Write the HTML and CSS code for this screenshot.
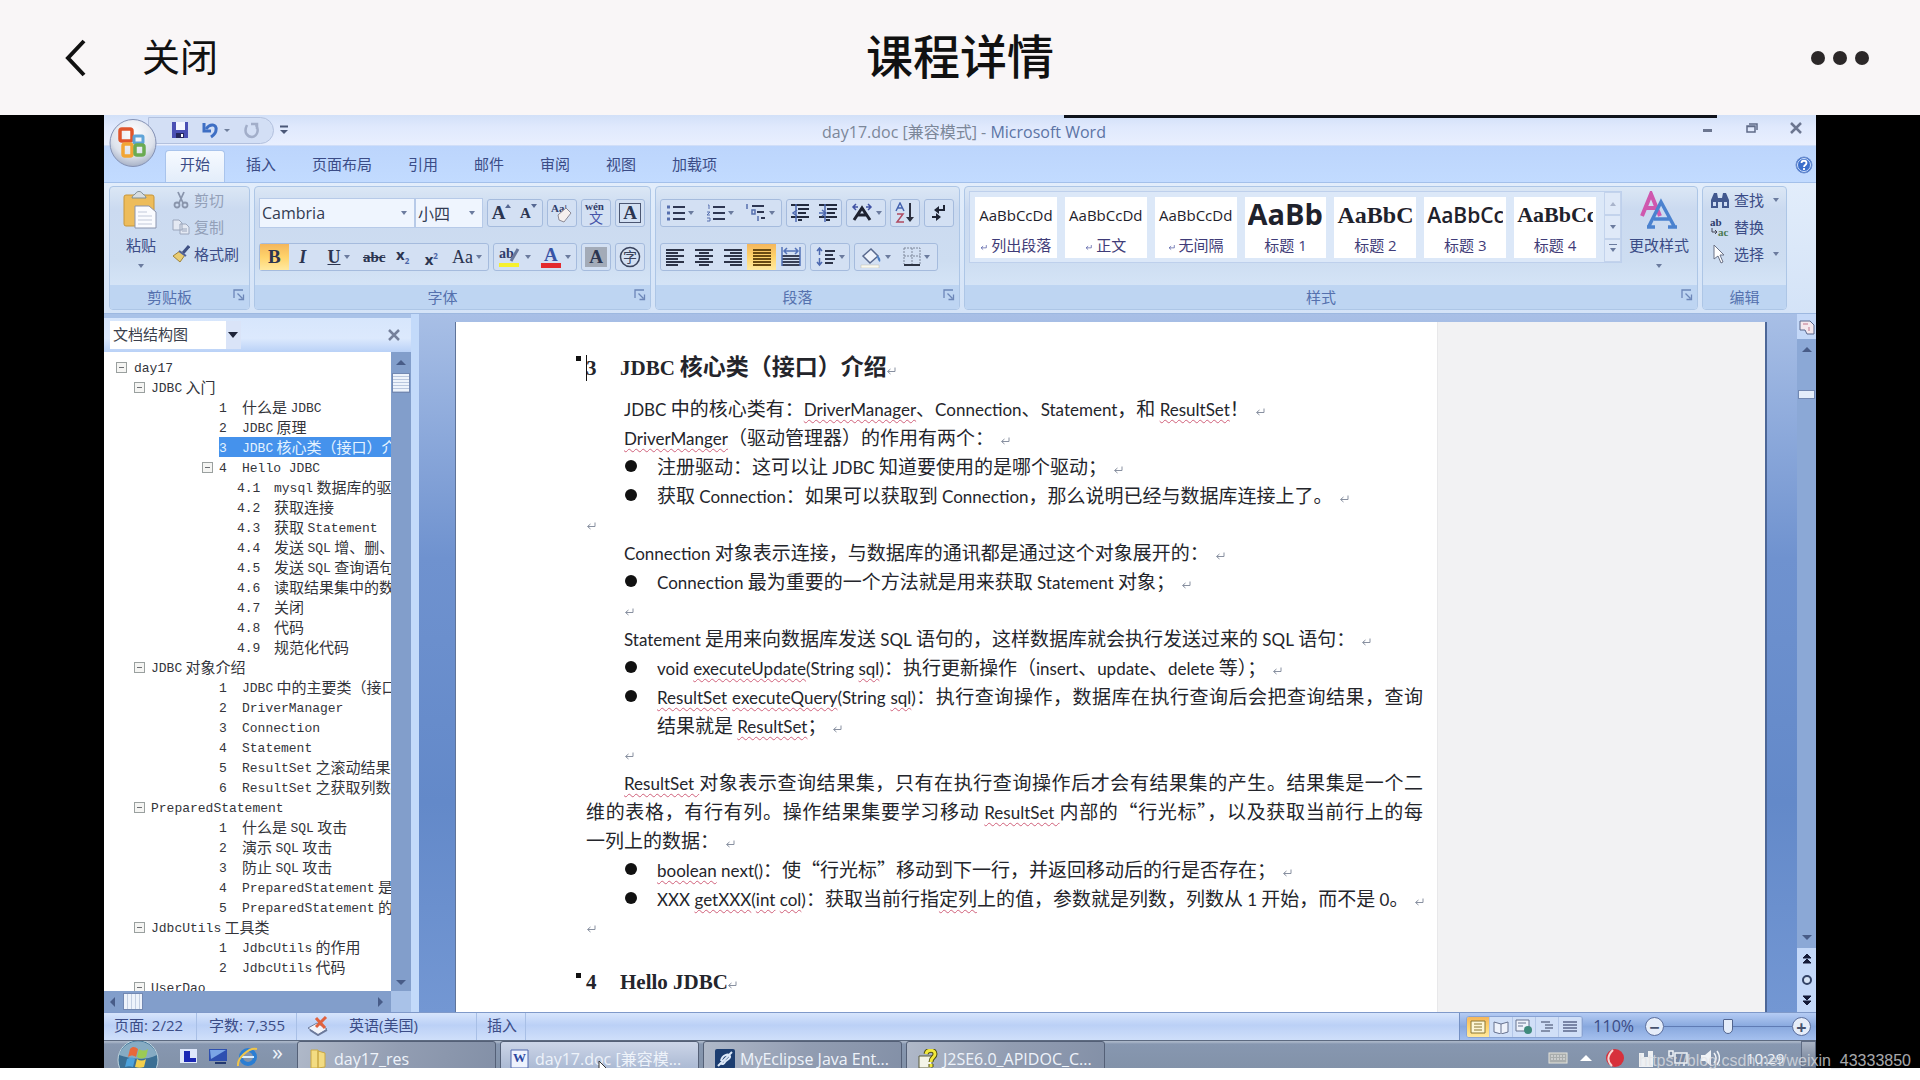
FILE: index.html
```html
<!DOCTYPE html>
<html lang="zh-CN">
<head>
<meta charset="utf-8">
<title>课程详情</title>
<link rel="stylesheet" href="styles.css">
</head>
<body>
<svg class="defs" aria-hidden="true">
  <symbol id="ret" viewBox="0 0 10 8"><path d="M9 0.5V4.5H2M4.5 2L1.5 4.5L4.5 7" fill="none" stroke="currentColor"/></symbol>
  <symbol id="launch" viewBox="0 0 12 12"><path d="M1 9V1h9M4.500 4.500l5 5M10.500 5.500v5h-5" fill="none" stroke="#6c86b8" stroke-width="1.300"/></symbol>
</svg>

<header class="app-bar">
  <div class="app-left">
    <button class="plain" aria-label="返回"><svg width="22" height="38" viewBox="0 0 22 38"><path d="M19 2L3 19L19 36" fill="none" stroke="#111" stroke-width="4"/></svg></button>
    <button class="plain close-text">关闭</button>
  </div>
  <h1>课程详情</h1>
  <button class="plain more" aria-label="更多"><svg width="60" height="16" viewBox="0 0 60 16" fill="#2c2829"><ellipse cx="8" cy="8" rx="7" ry="7"/><ellipse cx="30" cy="8" rx="7" ry="7"/><ellipse cx="52" cy="8" rx="7" ry="7"/></svg></button>
</header>

<main class="stage">
<div class="word">
  <div class="progress"></div>
  <button class="plain orb" aria-label="Office"><svg width="48" height="50" viewBox="0 0 48 50"><defs><radialGradient id="og" cx=".5" cy=".3" r=".8"><stop offset="0" stop-color="#fff"/><stop offset=".6" stop-color="#dde2ec"/><stop offset="1" stop-color="#8f9cb6"/></radialGradient></defs><ellipse cx="24" cy="25" rx="23" ry="23.500" fill="url(#og)" stroke="#8491b4"/><g fill="none" stroke-width="3.500"><rect x="11" y="11" width="12" height="12" rx="2" stroke="#e0552b"/><rect x="25" y="18" width="9" height="7" rx="1" stroke="#5fa4d8" stroke-width="3"/><rect x="14" y="26" width="9" height="12" rx="2" stroke="#f2a534"/><rect x="26" y="27" width="9" height="10" rx="2" stroke="#6bab52"/></g></svg></button>

  <div class="titlebar">
    <div class="qat">
      <button class="plain" aria-label="保存"><svg width="18" height="18" viewBox="0 0 18 18"><path d="M1 1h16v16H1z" fill="#4a50b4"/><path d="M5 1h9v8H5z" fill="#f3f6ff"/><path d="M5 12h8v5H5z" fill="#24265c"/><path d="M10 13h2v3h-2z" fill="#fff"/></svg></button>
      <button class="plain" aria-label="撤销"><svg width="28" height="18" viewBox="0 0 28 18"><path d="M2 2v8h7" fill="none" stroke="#3e6fc4" stroke-width="3"/><path d="M4 8c4-6 11-5 10 1c0 3-2 5-5 7" fill="none" stroke="#3e6fc4" stroke-width="3"/><path d="M22 8h6l-3 3z" fill="#6f7f9b"/></svg></button>
      <button class="plain" aria-label="重复"><svg width="18" height="18" viewBox="0 0 18 18"><path d="M4 4c-4 8 1 12 5 12s8-6 4-12M8 3h6v5" fill="none" stroke="#a2aec9" stroke-width="2.500"/></svg></button>
    </div>
    <button class="plain qat-more" aria-label="自定义快速访问工具栏"><svg width="8" height="10" viewBox="0 0 8 10"><path d="M0 1.500h8" stroke="#4b5878" stroke-width="2"/><path d="M0 5h8L4 9z" fill="#4b5878"/></svg></button>
    <div class="doc-title">day17.doc [兼容模式] - <span>Microsoft Word</span></div>
    <div class="win-buttons">
      <button class="plain" aria-label="最小化"><svg width="12" height="12"><path d="M1 8.500h9" stroke="#6c7690" stroke-width="3"/></svg></button>
      <button class="plain" aria-label="还原"><svg width="12" height="12"><path d="M1 4h8v6H1zM3 2h8v6M1 4.500h8" fill="none" stroke="#5f6b88" stroke-width="1.500"/></svg></button>
      <button class="plain" aria-label="关闭窗口"><svg width="12" height="12"><path d="M1 1l10 10M11 1L1 11" stroke="#6c7690" stroke-width="2.500"/></svg></button>
    </div>
  </div>

  <nav class="tabs">
    <button class="tab on">开始</button><button class="tab">插入</button><button class="tab">页面布局</button><button class="tab">引用</button><button class="tab">邮件</button><button class="tab">审阅</button><button class="tab">视图</button><button class="tab">加载项</button>
    <button class="plain help" aria-label="帮助"><svg width="18" height="18" viewBox="0 0 18 18"><circle cx="9" cy="9" r="8" fill="#3c6fcb" stroke="#6d8fcf"/><circle cx="9" cy="9" r="6.500" fill="none" stroke="#cfe0fb"/><path d="M6.500 7c0-3 5-3 5 0c0 2-2.500 2-2.500 4M9 12v2" fill="none" stroke="#fff" stroke-width="1.800"/></svg></button>
  </nav>

  <div class="ribbon">
    <section class="group g-clip">
      <div class="group-body clip">
        <button class="plain big paste"><svg width="36" height="40" viewBox="0 0 36 40"><rect x="1" y="5" width="30" height="31" rx="2" fill="#edbc5b" stroke="#c7963a"/><path d="M9 8c0-3 3-3 4-5s5-2 6 0s4 2 4 5z" fill="#d7dde0" stroke="#7f8d93"/><path d="M12 16h14l7 6v16H12z" fill="#fafbff" stroke="#8b94ad"/><path d="M15 22h9M15 26h14M15 30h14M15 34h14" stroke="#c2c9da"/></svg><span>粘贴</span><i class="dd"></i></button>
        <div class="stack">
          <button class="plain row off"><svg width="18" height="18" viewBox="0 0 18 18" fill="none" stroke="#8995ac" stroke-width="1.800"><path d="M6 1l5 11M12 1L7 12"/><circle cx="5" cy="14" r="2.500"/><circle cx="13" cy="14" r="2.500"/></svg>剪切</button>
          <button class="plain row off"><svg width="18" height="16" viewBox="0 0 18 16" fill="#e4e9f3" stroke="#9ba6bc"><path d="M1 1h6l3 3v7H1zM8 5h6l3 3v7H8z"/><path d="M10 10h5M10 12h5"/></svg>复制</button>
          <button class="plain row"><svg width="18" height="18" viewBox="0 0 18 18"><path d="M17 1l-6 7" stroke="#3f5184" stroke-width="3"/><path d="M8 6l5 4l-5 7L1 11z" fill="#e9cc72" stroke="#9f833b"/><path d="M7 6l7 5" stroke="#51629a" stroke-width="2"/></svg>格式刷</button>
        </div>
      </div>
      <footer><span>剪贴板</span><svg class="launch"><use href="#launch"/></svg></footer>
    </section>

    <section class="group g-font">
      <div class="group-body rows">
        <div class="line">
          <div class="combo wide"><input value="Cambria" aria-label="字体"><i class="dd"></i></div><div class="combo"><input value="小四" aria-label="字号"><i class="dd"></i></div>
          <div class="tb w56 serif first"><button aria-label="增大字体"><b>A</b><i class="tri up"></i></button><button aria-label="缩小字体"><b class="sm">A</b><i class="tri"></i></button></div>
          <div class="tb w30"><button aria-label="清除格式"><svg width="24" height="22" viewBox="0 0 24 22"><text x="1" y="10" class="t9">Aa|</text><path d="M8 13l8-7l5 5l-7 9l-5-2z" fill="#f6f0ee" stroke="#8c8a96"/></svg></button></div>
          <div class="tb w30"><button aria-label="拼音指南"><svg width="24" height="24" viewBox="0 0 24 24"><text x="1" y="9" class="t10">wén</text><text x="5" y="22" class="t14">文</text></svg></button></div>
          <div class="tb w30 serif"><button aria-label="字符边框"><b class="boxed">A</b></button></div>
        </div>
        <div class="line">
          <div class="tb w230 serif">
            <button class="hot"><b>B</b></button><button><em>I</em></button><button class="x"><u>U</u><i class="dd"></i></button><button><s>abc</s></button><button class="sans"><b>x<sub>2</sub></b></button><button class="sans"><b>x<sup>2</sup></b></button><button class="x">Aa<i class="dd"></i></button>
          </div>
          <div class="tb w83"><button class="x" aria-label="突出显示"><svg width="24" height="24" viewBox="0 0 24 24"><path d="M1 18h20v4H1z" fill="#f6f02e"/><text x="1" y="13" class="t12">ab</text><path d="M20 4l-7 12" stroke="#69789c" stroke-width="3"/></svg><i class="dd"></i></button><button class="x" aria-label="字体颜色"><svg width="22" height="24" viewBox="0 0 22 24"><path d="M1 18h20v5H1z" fill="#e32a2e"/><text x="4" y="16" class="tA">A</text></svg><i class="dd"></i></button></div>
          <div class="tb w30 serif"><button aria-label="字符底纹"><b class="shade">A</b></button></div>
          <div class="tb w30"><button aria-label="带圈字符"><svg width="22" height="22" viewBox="0 0 22 22"><circle cx="11" cy="11" r="9.500" fill="none" stroke="#39435d" stroke-width="1.500"/><text x="4" y="16" class="t14 dk">字</text></svg></button></div>
        </div>
      </div>
      <footer><span>字体</span><svg class="launch"><use href="#launch"/></svg></footer>
    </section>

    <section class="group g-para">
      <div class="group-body rows">
        <div class="line">
          <div class="tb w122">
            <button class="x" aria-label="项目符号"><svg width="18" height="18"><path d="M6 3h12M6 9h12M6 15h12" stroke="#2e3752" stroke-width="2"/><path d="M0 3h3M0 9h3M0 15h3" stroke="#566fae" stroke-width="3"/></svg><i class="dd"></i></button>
            <button class="x" aria-label="编号"><svg width="18" height="18"><path d="M6 3h12M6 9h12M6 15h12" stroke="#2e3752" stroke-width="2"/><path d="M1 1h1v4M0 8h3l-3 3h3M0 14h3v3H0" fill="none" stroke="#566fae"/></svg><i class="dd"></i></button>
            <button class="x" aria-label="多级列表"><svg width="20" height="20"><path d="M6 3h12M11 9h7M15 15h4" stroke="#2e3752" stroke-width="2"/><path d="M1 1v5M6 7h3v4H6zM12 13v5" fill="none" stroke="#566fae" stroke-width="1.500"/></svg><i class="dd"></i></button>
          </div>
          <div class="tb w57"><button aria-label="减少缩进量"><svg width="20" height="20"><path d="M1 2h18M8 6h11M8 10h8M1 14h18M8 17h4" stroke="#222a3e" stroke-width="2"/><path d="M7 7l-4 3l4 3M6 1v18" fill="none" stroke="#4d69b0" stroke-width="1.500"/></svg></button><button aria-label="增加缩进量"><svg width="20" height="20"><path d="M1 2h18M9 6h10M9 10h8M1 14h18M8 17h4" stroke="#222a3e" stroke-width="2"/><path d="M1 10h6M4 7l4 3l-4 3M7 1v18" fill="none" stroke="#4d69b0" stroke-width="1.500"/></svg></button></div>
          <div class="tb w39"><button class="x" aria-label="中文版式"><svg width="22" height="20"><path d="M3 17L11 5L19 17M7 12h8" fill="none" stroke="#1e2230" stroke-width="3"/><path d="M5 1L2 4l3 3M2 4h5M17 1l3 3l-3 3M20 4h-5" fill="none" stroke="#4052a4" stroke-width="1.500"/></svg><i class="dd"></i></button></div>
          <div class="tb w30"><button aria-label="排序"><svg width="20" height="22"><path d="M1 9L5 1L9 9M2 6h6" fill="none" stroke="#4664b0" stroke-width="1.500"/><path d="M2 12h6l-6 8h7" fill="none" stroke="#b04a62" stroke-width="1.500"/><path d="M15 1v15" stroke="#2c3040" stroke-width="2"/><path d="M11 15h8l-4 5z" fill="#2c3040"/></svg></button></div>
          <div class="tb w30"><button aria-label="显示编辑标记"><svg width="18" height="20"><path d="M14 2v5H8M2 14h6" fill="none" stroke="#1e2434" stroke-width="2"/><path d="M9 3v8L4 7zM6 10v8l5-4z" fill="#1e2434"/></svg></button></div>
        </div>
        <div class="line">
          <div class="tb w145">
            <button aria-label="左对齐"><svg width="18" height="18"><path d="M0 2h18M0 5h12M0 8h18M0 11h12M0 14h18M0 17h12" stroke="#2d3448" stroke-width="2"/></svg></button><button aria-label="居中"><svg width="18" height="18"><path d="M0 2h18M4 5h10M0 8h18M4 11h10M0 14h18M4 17h10" stroke="#2d3448" stroke-width="2"/></svg></button><button aria-label="右对齐"><svg width="18" height="18"><path d="M0 2h18M6 5h12M0 8h18M6 11h12M0 14h18M6 17h12" stroke="#2d3448" stroke-width="2"/></svg></button><button class="hot" aria-label="两端对齐"><svg width="18" height="18"><path d="M0 2h18M0 5h18M0 8h18M0 11h18M0 14h18M0 17h18" stroke="#6a4a12" stroke-width="2"/></svg></button><button aria-label="分散对齐"><svg width="20" height="20"><path d="M1 9h18M1 12h18M1 15h18M1 18h18" stroke="#3a4258" stroke-width="2"/><path d="M1 0v19M19 0v19M3 4h14M6 1L3 4l3 3M14 1l3 3l-3 3" fill="none" stroke="#5473b8" stroke-width="1.500"/></svg></button>
          </div>
          <div class="tb w39"><button class="x" aria-label="行距"><svg width="20" height="20"><path d="M9 4h10M9 8h8M9 12h10M9 16h8" stroke="#2d3448" stroke-width="2"/><path d="M3.500 1v7M1 4l2.500-3L6 4M3.500 11v7M1 15l2.500 3L6 15" fill="none" stroke="#4d69b0" stroke-width="1.500"/></svg><i class="dd"></i></button></div>
          <div class="tb w84"><button class="x" aria-label="底纹"><svg width="22" height="22"><path d="M3 10l8-7l7 7l-8 7z" fill="#edf2fb" stroke="#59698e" stroke-width="1.500"/><path d="M17 9c3 2 4 5 3 7c-2-1-3-4-3-7" fill="#4d7fc4"/><path d="M1 19h18v3H1z" fill="#f9f9f1" stroke="#bdbdac" stroke-width=".5"/></svg><i class="dd"></i></button><button class="x" aria-label="框线"><svg width="18" height="20"><path d="M1 1h16v16M1 1v16M9 1v16M1 9h16" fill="none" stroke="#7d8699" stroke-dasharray="2 1"/><path d="M1 18h16" stroke="#2e3443" stroke-width="2"/></svg><i class="dd"></i></button></div>
        </div>
      </div>
      <footer><span>段落</span><svg class="launch"><use href="#launch"/></svg></footer>
    </section>

    <section class="group g-style">
      <div class="group-body styles">
        <div class="gallery">
          <button class="card"><span class="pv">AaBbCcDd</span><span><svg class="cr"><use href="#ret"/></svg> 列出段落</span></button>
          <button class="card"><span class="pv">AaBbCcDd</span><span><svg class="cr"><use href="#ret"/></svg> 正文</span></button>
          <button class="card"><span class="pv">AaBbCcDd</span><span><svg class="cr"><use href="#ret"/></svg> 无间隔</span></button>
          <button class="card"><span class="pv h1">AaBb</span><span>标题 1</span></button>
          <button class="card"><span class="pv h2">AaBbC</span><span>标题 2</span></button>
          <button class="card"><span class="pv h3">AaBbCc</span><span>标题 3</span></button>
          <button class="card"><span class="pv h4">AaBbCc</span><span>标题 4</span></button>
          <div class="gal-scroll"><button aria-label="上一行"><i class="dd up"></i></button><button aria-label="下一行"><i class="dd"></i></button><button aria-label="其他"><i class="dd bar"></i></button></div>
        </div>
        <button class="plain big change"><svg width="38" height="38" viewBox="0 0 38 38"><path d="M2 25L11 3L20 25M6 17h10" fill="none" stroke="#cf58ae" stroke-width="4"/><path d="M9 35L21 11L34 35M14 28h15M7 36h8M28 36h9" fill="none" stroke="#4b82cf" stroke-width="3.500"/></svg><span>更改样式</span><i class="dd"></i></button>
      </div>
      <footer><span>样式</span><svg class="launch"><use href="#launch"/></svg></footer>
    </section>

    <section class="group g-edit">
      <div class="group-body">
        <div class="stack">
          <button class="plain row"><svg width="20" height="18" viewBox="0 0 20 18"><path d="M1 17V9l3-7h3l1 5h4l1-5h3l3 7v8h-7v-6H8v6z" fill="#42588e"/><path d="M3 11h3v4H3zM14 11h3v4h-3z" fill="#cfdcf3"/></svg>查找<i class="dd"></i></button>
          <button class="plain row"><svg width="20" height="20" viewBox="0 0 20 20"><text x="0" y="9" class="t10">ab</text><text x="8" y="19" class="t10 gr">ac</text><path d="M2 11v4h5M5 13l2 2l-2 2" fill="none" stroke="#445"/></svg>替换</button>
          <button class="plain row"><svg width="20" height="20" viewBox="0 0 20 20"><path d="M4 1v14l4-3l3 7l2-1l-3-7h4z" fill="#fff" stroke="#6b7287"/></svg>选择<i class="dd"></i></button>
        </div>
      </div>
      <footer><span>编辑</span></footer>
    </section>
  </div>

  <div class="work">
    <aside class="pane">
      <div class="pane-head"><select aria-label="窗格"><option>文档结构图</option></select><i class="dd pane-dd"></i><button class="plain" aria-label="关闭窗格"><svg width="12" height="12"><path d="M1 1l10 10M11 1L1 11" stroke="#75809b" stroke-width="2.500"/></svg></button></div>
      <div class="pane-main">
        <ul class="tree">
          <li class="l0"><i class="box"></i><span class="en">day17</span></li>
          <li class="l1"><i class="box"></i><span class="en">JDBC</span> 入门</li>
          <li class="l2"><span class="n">1</span>什么是 <span class="en">JDBC</span></li>
          <li class="l2"><span class="n">2</span><span class="en">JDBC</span> 原理</li>
          <li class="l2 sel"><span class="n">3</span><span class="en">JDBC</span> 核心类（接口）介绍</li>
          <li class="l2 open"><i class="box"></i><span class="n">4</span><span class="en">Hello JDBC</span></li>
          <li class="l3"><span class="n">4.1</span><span class="en">mysql</span> 数据库的驱动</li>
          <li class="l3"><span class="n">4.2</span>获取连接</li>
          <li class="l3"><span class="n">4.3</span>获取 <span class="en">Statement</span></li>
          <li class="l3"><span class="n">4.4</span>发送 <span class="en">SQL</span> 增、删、改</li>
          <li class="l3"><span class="n">4.5</span>发送 <span class="en">SQL</span> 查询语句</li>
          <li class="l3"><span class="n">4.6</span>读取结果集中的数据</li>
          <li class="l3"><span class="n">4.7</span>关闭</li>
          <li class="l3"><span class="n">4.8</span>代码</li>
          <li class="l3"><span class="n">4.9</span>规范化代码</li>
          <li class="l1"><i class="box"></i><span class="en">JDBC</span> 对象介绍</li>
          <li class="l2"><span class="n">1</span><span class="en">JDBC</span> 中的主要类（接口）</li>
          <li class="l2"><span class="n">2</span><span class="en">DriverManager</span></li>
          <li class="l2"><span class="n">3</span><span class="en">Connection</span></li>
          <li class="l2"><span class="n">4</span><span class="en">Statement</span></li>
          <li class="l2"><span class="n">5</span><span class="en">ResultSet</span> 之滚动结果集</li>
          <li class="l2"><span class="n">6</span><span class="en">ResultSet</span> 之获取列数据</li>
          <li class="l1"><i class="box"></i><span class="en">PreparedStatement</span></li>
          <li class="l2"><span class="n">1</span>什么是 <span class="en">SQL</span> 攻击</li>
          <li class="l2"><span class="n">2</span>演示 <span class="en">SQL</span> 攻击</li>
          <li class="l2"><span class="n">3</span>防止 <span class="en">SQL</span> 攻击</li>
          <li class="l2"><span class="n">4</span><span class="en">PreparedStatement</span> 是什么</li>
          <li class="l2"><span class="n">5</span><span class="en">PreparedStatement</span> 的使用</li>
          <li class="l1"><i class="box"></i><span class="en">JdbcUtils</span> 工具类</li>
          <li class="l2"><span class="n">1</span><span class="en">JdbcUtils</span> 的作用</li>
          <li class="l2"><span class="n">2</span><span class="en">JdbcUtils</span> 代码</li>
          <li class="l1"><i class="box"></i><span class="en">UserDao</span></li>
        </ul>
        <div class="vbar"><i class="arr up"></i><span class="thumb"></span><i class="arr down"></i></div>
      </div>
      <div class="hbar"><i class="arr left"></i><span class="thumb"></span><i class="arr right"></i></div>
    </aside>

    <div class="canvas">
      <article class="paper">
        <div class="text">
          <h2><i class="sq"></i><i class="caret"></i><span class="num">3</span><span class="en">JDBC</span> 核心类（接口）介绍<svg class="cr"><use href="#ret"/></svg></h2>
          <p class="in"><span class="en">JDBC</span> 中的核心类有：<span class="en bad">DriverManager</span>、<span class="en">Connection</span>、<span class="en">Statement</span>，和 <span class="en bad">ResultSet</span>！<svg class="cr"><use href="#ret"/></svg></p>
          <p class="in"><span class="en bad">DriverManger</span>（驱动管理器）的作用有两个：<svg class="cr"><use href="#ret"/></svg></p>
          <p class="li">注册驱动：这可以让 <span class="en">JDBC</span> 知道要使用的是哪个驱动；<svg class="cr"><use href="#ret"/></svg></p>
          <p class="li">获取 <span class="en">Connection</span>：如果可以获取到 <span class="en">Connection</span>，那么说明已经与数据库连接上了。<svg class="cr"><use href="#ret"/></svg></p>
          <p class="blank"><svg class="cr"><use href="#ret"/></svg></p>
          <p class="in"><span class="en">Connection</span> 对象表示连接，与数据库的通讯都是通过这个对象展开的：<svg class="cr"><use href="#ret"/></svg></p>
          <p class="li"><span class="en">Connection</span> 最为重要的一个方法就是用来获取 <span class="en">Statement</span> 对象；<svg class="cr"><use href="#ret"/></svg></p>
          <p class="blank in"><svg class="cr"><use href="#ret"/></svg></p>
          <p class="in"><span class="en">Statement</span> 是用来向数据库发送 <span class="en">SQL</span> 语句的，这样数据库就会执行发送过来的 <span class="en">SQL</span> 语句：<svg class="cr"><use href="#ret"/></svg></p>
          <p class="li"><span class="en">void <span class="bad">executeUpdate</span>(String <span class="bad">sql</span>)</span>：执行更新操作（<span class="en">insert</span>、<span class="en">update</span>、<span class="en">delete</span> 等）；<svg class="cr"><use href="#ret"/></svg></p>
          <p class="li"><span class="full"><span class="en"><span class="bad">ResultSet</span> <span class="bad">executeQuery</span>(String <span class="bad">sql</span>)</span>：执行查询操作，数据库在执行查询后会把查询结果，查询</span>结果就是 <span class="en bad">ResultSet</span>；<svg class="cr"><use href="#ret"/></svg></p>
          <p class="blank in"><svg class="cr"><use href="#ret"/></svg></p>
          <p><span class="full in"><span class="en bad">ResultSet </span> 对象表示查询结果集，只有在执行查询操作后才会有结果集的产生。结果集是一个二</span><span class="full">维的表格，有行有列。操作结果集要学习移动 <span class="en bad">ResultSet </span> 内部的“行光标”，以及获取当前行上的每</span>一列上的数据：<svg class="cr"><use href="#ret"/></svg></p>
          <p class="li"><span class="en"><span class="bad">boolean</span> next()</span>：使“行光标”移动到下一行，并返回移动后的行是否存在；<svg class="cr"><use href="#ret"/></svg></p>
          <p class="li"><span class="en">XXX <span class="bad">getXXX</span>(<span class="bad">int</span> <span class="bad">col</span>)</span>：获取当前行指<span class="bad">定列</span>上的值，参数就是列数，列数从 <span class="en">1</span> 开始，而不是 <span class="en">0</span>。<svg class="cr"><use href="#ret"/></svg></p>
          <p class="blank"><svg class="cr"><use href="#ret"/></svg></p>
          <h2 class="next"><i class="sq"></i><span class="num">4</span><span class="en">Hello JDBC</span><svg class="cr"><use href="#ret"/></svg></h2>
        </div>
        <div class="notes"></div>
      </article>
    </div>
    <div class="docbar">
      <svg class="ruler" width="16" height="16" viewBox="0 0 16 16"><path d="M1 2h10l4 4v9H8l-2-4H1z" fill="#f4e8ee" stroke="#59668a"/><path d="M4 5h5M10 8v4" stroke="#c0758a"/></svg>
      <div class="track"><i class="arr up"></i><span class="thumb"></span><i class="arr down"></i></div>
      <svg class="jump" width="14" height="60" viewBox="0 0 14 60"><path d="M7 4l4 4H3zM7 9l4 4H3zM3 46h8l-4 4zM3 51h8l-4 4z" fill="#151b38" stroke="#151b38"/><circle cx="7" cy="30" r="4" fill="#d7e4f5" stroke="#334366" stroke-width="2"/></svg>
    </div>
  </div>

  <div class="status">
    <span class="cell c1">页面: 2/22</span><span class="cell c2">字数: 7,355</span>
    <span class="cell c3"><svg width="22" height="20" viewBox="0 0 22 20"><path d="M1 12l9-5l10 6l-9 6z" fill="#f1f4fb" stroke="#6c7a9c"/><path d="M3 14l8 5l9-5" fill="none" stroke="#6c7a9c" stroke-width="2"/><path d="M9 2l9 10M19 1L9 11" stroke="#e0623f" stroke-width="3"/></svg>英语(美国)</span><span class="cell c4">插入</span>
    <div class="views">
      <div class="view-set">
        <button class="hot" aria-label="页面视图"><svg width="16" height="14"><path d="M1 1h14v12H1z" fill="#fdf6d4" stroke="#8a7633"/><path d="M4 4h8M4 7h8M4 10h8" stroke="#8a7633"/></svg></button><button aria-label="阅读版式"><svg width="16" height="14"><path d="M1 2l7 2l7-2v10l-7 2l-7-2zM8 4v9" fill="#eef2fb" stroke="#66728f"/></svg></button><button aria-label="Web 版式"><svg width="18" height="16"><path d="M1 1h13v11H1zM3 4h8M3 7h5" fill="#eef2fb" stroke="#66728f"/><circle cx="13" cy="11" r="4" fill="#3f8a7c"/></svg></button><button aria-label="大纲视图"><svg width="14" height="14"><path d="M1 2h9M5 5h8M5 8h8M1 11h9" stroke="#8390ab" stroke-width="2"/></svg></button><button aria-label="草稿"><svg width="14" height="14"><path d="M0 2h14M0 5h14M0 8h14M0 11h14" stroke="#7885a6" stroke-width="2"/></svg></button>
      </div>
      <span class="pct">110%</span>
      <button class="plain round" aria-label="缩小">−</button><label class="zoom"><input type="range" min="0" max="100" value="50" aria-label="显示比例"></label><button class="plain round" aria-label="放大">+</button>
    </div>
  </div>

  <div class="taskbar">
    <button class="plain start" aria-label="开始菜单"><svg width="42" height="28" viewBox="0 0 42 28"><circle cx="21" cy="19" r="20" fill="#3b6f94" stroke="#bfd4de"/><path d="M2 14a20 20 0 0 1 38 0c-12 6-26 4-38 0" fill="#b9d4e2" opacity=".6"/><path d="M13 8c3-3 5-2 8 0l-2 8c-3-2-5-2-8 0z" fill="#e8683a"/><path d="M22 8c3 2 6 2 9 0l-2 8c-3 2-6 2-9 0z" fill="#9bca54"/><path d="M10 18c3-2 6-2 8 0l-2 8c-3-1-5-1-8 0z" fill="#4ca2dc"/><path d="M20 18c3 2 6 2 9 0l-2 8c-3 1-6 1-9 0z" fill="#f3cf4d"/></svg></button>
    <div class="quick">
      <svg width="20" height="18"><path d="M1 1h17v14H1z" fill="#dfe8fb"/><path d="M5 3h6v7h6v4H5z" fill="#1b28b4"/></svg>
      <svg width="20" height="18"><path d="M1 1h18v12H1z" fill="#2e50b0"/><path d="M2 2h16L3 11z" fill="#7aa5e6"/><path d="M7 15h11" stroke="#22386e" stroke-width="2"/></svg>
      <svg width="22" height="20"><circle cx="11" cy="10" r="7" fill="none" stroke="#2b7ed3" stroke-width="4"/><path d="M5 10h12" stroke="#d8ecff" stroke-width="2"/><path d="M1 19C0 11 12 0 20 2" fill="none" stroke="#f0c54a" stroke-width="2"/></svg>
      <b>»</b>
    </div>
    <button class="task"><svg width="20" height="20"><path d="M2 1h7v18H2zM9 2l7 2v14l-7 1z" fill="#f3dc82" stroke="#c9a845"/></svg>day17_res</button>
    <button class="task active"><svg width="20" height="20"><path d="M1 1h17v18H1z" fill="#eef2fd" stroke="#5068ae"/><text x="3" y="13" class="tW">W</text></svg>day17.doc [兼容模...</button>
    <button class="task"><svg width="20" height="20"><rect width="20" height="20" rx="2" fill="#1c3d70"/><path d="M3 17L17 3M6 12c1-6 8-8 9-5s-4 4-5 6s-3 3-4 1" fill="none" stroke="#dce8f8" stroke-width="2"/></svg>MyEclipse Java Ent...</button>
    <button class="task"><svg width="20" height="20"><path d="M1 7h13v12H1z" fill="#f4f4e8" stroke="#595b3a"/><path d="M8 5c1-5 9-5 9 0c0 4-4 3-4 8M13 15v3" fill="none" stroke="#4c4a13" stroke-width="5"/><path d="M8 5c1-5 9-5 9 0c0 4-4 3-4 8M13 15v3" fill="none" stroke="#f2e83c" stroke-width="3"/></svg>J2SE6.0_APIDOC_C...</button>
    <div class="tray">
      <svg width="20" height="14"><rect x="1" y="2" width="18" height="10" fill="#a9adad" stroke="#e5e4db"/><path d="M3 5h14M3 8h14" stroke="#eee" stroke-dasharray="2 1"/></svg>
      <svg width="12" height="8"><path d="M0 7h12L6 1z" fill="#fff"/></svg>
      <svg width="20" height="20"><circle cx="11" cy="10" r="9" fill="#d7303b"/><path d="M9 2C3 8 3 13 8 18" fill="none" stroke="#f6d6d2" stroke-width="2"/></svg>
      <svg width="20" height="20"><path d="M3 19V5h5v4h4V3h5v16z" fill="#eef0f3"/></svg>
      <svg width="20" height="20"><path d="M1 3h4v5H1zM7 5h12v10H7zM10 15h6v3" fill="#75849e" stroke="#f0f3f7" stroke-width="1.500"/></svg>
      <svg width="20" height="20"><path d="M1 7h4l6-5v16l-6-5H1z" fill="#f0f3f7"/><path d="M14 5q4 5 0 10M17 3q5 7 0 14" fill="none" stroke="#f0f3f7" stroke-width="1.500"/></svg>
      <time>10:29</time>
    </div>
    <i class="desk"></i>
    <svg class="pointer" width="12" height="8" viewBox="0 0 12 8"><path d="M1 8V0l7 7" fill="#fff" stroke="#333"/></svg>
  </div>
</div>
<div class="mark">https://blog.csdn.net/weixin_43333850</div>
</main>
</body>
</html>
```
FILE: styles.css
```css
* { box-sizing: border-box; }
body {
  margin: 0;
  height: 100vh;
  min-height: 800px;
  padding-bottom: 12px;
  display: flex;
  flex-direction: column;
  background: #fff;
  font-family: "Open Sans", "Noto Sans CJK SC", sans-serif;
  font-size: 15px;
  overflow: hidden;
}
button, input, select { font: inherit; color: inherit; }
button { padding: 0; border: 0; background: none; }
svg { display: block; flex: none; }
i { font-style: normal; }
.defs { position: absolute; width: 0; height: 0; }
.plain { display: flex; align-items: center; justify-content: center; }

/* App bar */
.app-bar {
  flex: none;
  height: 115px;
  padding: 0 50px;
  display: grid;
  grid-template-columns: 1fr auto 1fr;
  align-items: center;
  background: #f9f6f7;
  color: #111;
  font-family: "Noto Sans CJK SC", sans-serif;
}
.app-left { display: flex; align-items: center; gap: 55px; padding-left: 15px; }
.close-text { font-size: 38px; line-height: 56px; padding-bottom: 5px; }
.app-bar h1 { margin: 0; padding-bottom: 8px; font-size: 47px; line-height: 68px; font-weight: 500; }
.more { justify-self: end; }

/* Video stage */
.stage {
  position: relative;
  flex: 1;
  min-height: 0;
  padding: 0 104px;
  background: #000;
}
.word {
  position: relative;
  height: 100%;
  display: flex;
  flex-direction: column;
  background: #bfd8fb;
  color: #3b4c86;
}
.progress { position: absolute; z-index: 2; top: 0; right: 99px; width: 653px; height: 3px; background: #10131c; }
.orb { position: absolute; z-index: 2; left: 5px; top: 3px; }

.titlebar {
  flex: none;
  height: 31px;
  display: flex;
  align-items: center;
  background: linear-gradient(#d2e0f8, #e0e9fd 40%, #e9effe);
  border-bottom: 1px solid #d0def8;
}
.qat {
  height: 27px;
  margin-left: 44px;
  width: 126px;
  padding-left: 22px;
  display: flex;
  align-items: center;
  gap: 13px;
  border: 1px solid #b3c1de;
  border-radius: 0 14px 14px 0;
  background: #d3dff5;
}
.qat-more { margin-left: 6px; }
.doc-title { flex: 1; text-align: center; font-size: 16px; color: #7c8799; padding: 4px 62px 0 0; line-height: 26px; }
.doc-title span { color: #5c74a5; }
.win-buttons { display: flex; gap: 32px; padding: 0 14px 4px 0; }

.tabs {
  flex: none;
  height: 36px;
  display: flex;
  align-items: flex-end;
  gap: 6px;
  padding: 0 3px 0 61px;
  background: linear-gradient(#bcd5fc, #c2dbff);
}
.tab { height: 32px; padding: 0 15px 4px; line-height: 26px; border-radius: 4px 4px 0 0; }
.tab.on { background: linear-gradient(#f6faff, #e3edfa); border: 1px solid #a9c4ec; border-bottom: 0; padding: 0 14px 5px; }
.help { margin: 0 0 8px auto; }

/* Ribbon */
.ribbon {
  flex: none;
  height: 132px;
  padding: 3px 29px 3px 5px;
  display: flex;
  gap: 4px;
  background: linear-gradient(#e2edfb, #d4e3f7);
  border-top: 1px solid #a3c0ea;
  border-bottom: 1px solid #9db8e0;
}
.group {
  flex: none;
  display: flex;
  flex-direction: column;
  border: 1px solid #adc6e6;
  border-radius: 4px;
  background: linear-gradient(#dbe7f5 0, #cbdaf0 18%, #cdddf1 60%, #dbeafb);
  overflow: hidden;
}
.g-clip { width: 141px; }
.g-font { width: 397px; }
.g-para { width: 305px; }
.g-style { flex: 1 0 730px; }
.g-edit { width: 85px; }
.group-body { flex: 1; min-height: 0; }
.group footer {
  height: 24px;
  display: flex;
  align-items: center;
  background: #bed5f2;
  color: #5571ae;
  line-height: 24px;
}
.group footer span { flex: 1; text-align: center; }
.launch { width: 12px; height: 12px; margin: 0 4px 4px; }
.dd { display: block; flex: none; width: 0; height: 0; border: 3px solid transparent; border-top: 4px solid #6b7b9e; border-bottom: 0; }
.dd.up { border: 3px solid transparent; border-bottom: 4px solid #a9b4cb; border-top: 0; }
.dd.bar { position: relative; }
.dd.bar::before { content: ""; position: absolute; left: -4px; top: -8px; width: 8px; height: 1px; background: #6b7b9e; }

.clip { display: flex; padding: 0 0 0 13px; gap: 13px; }
.big { flex-direction: column; justify-content: flex-start; line-height: 22px; }
.paste { width: 36px; padding-top: 3px; }
.paste svg { margin-bottom: 4px; }
.paste .dd, .change .dd { margin-top: 8px; }
.stack { display: flex; flex-direction: column; }
.row { height: 27px; justify-content: flex-start; gap: 4px; white-space: nowrap; padding-bottom: 2px; }
.row .dd { margin-left: 5px; }
.off { color: #93a0b8; }
.g-edit .stack { padding-left: 7px; }

.rows { padding: 12px 5px 0 4px; display: flex; flex-direction: column; gap: 16px; }
.g-para .rows { padding-left: 4px; }
.line { display: flex; align-items: center; gap: 4px; height: 28px; }
.combo {
  width: 68px;
  height: 30px;
  display: flex;
  align-items: center;
  padding-right: 7px;
  background: #eff5fe;
  border: 1px solid #b7cae8;
  color: #333b52;
}
.combo.wide { width: 156px; margin-right: -4px; }
.combo input { flex: 1; min-width: 0; width: 0; border: 0; background: none; padding: 0 0 0 2px; font-size: 16px; outline: 0; }
.tb {
  height: 28px;
  display: flex;
  border: 1px solid #a5bbdd;
  border-radius: 3px;
  background: #d3e0f3;
  color: #2b3550;
}
.tb button { flex: 2 1 0; min-width: 0; display: flex; align-items: center; justify-content: center; font-size: 16px; line-height: 26px; white-space: nowrap; }
.tb button.x { flex-grow: 3; gap: 3px; }
.tb.serif button { font-family: "Liberation Serif", serif; font-size: 18px; }
.tb.serif button.sans { font-family: "Open Sans", sans-serif; font-size: 15px; }
.tb .hot, .view-set .hot { background: linear-gradient(#f4b65c, #ffd36b 50%, #ffe9a0); }
.tb.serif s { font-size: 15px; }
.tb em, .tb u, .tb s { font-weight: 700; }
.tb sub, .tb sup { font-size: 8px; color: #4a63a5; }
.w30 { width: 30px; } .w39 { width: 40px; } .w56 { width: 56px; } .w57 { width: 57px; }
.w83 { width: 84px; } .w84 { width: 84px; } .w122 { width: 122px; } .w145 { width: 146px; } .w230 { width: 231px; }
.tb b { font-size: 19px; }
.tb.serif .sans b { font-size: 15px; }
.tb b.sm { font-size: 15px; }
.tri { width: 0; height: 0; border: 3px solid transparent; border-top: 4px solid #566892; border-bottom: 0; margin-bottom: 14px; }
.tri.up { border: 3px solid transparent; border-top: 0; border-bottom: 4px solid #566892; }
.boxed { border: 1px solid #4b5672; line-height: 18px; padding: 0 3px; }
.shade { background: #a3abb8; line-height: 20px; padding: 0 4px; }
text { font-family: "Liberation Serif", "Noto Sans CJK SC", serif; fill: #2f3d6b; font-weight: bold; }
.t9 { font-size: 11px; } .t10 { font-size: 11px; } .t12 { font-size: 14px; } .t14 { font-size: 14px; fill: #4553a8; font-weight: 400; }
.tA { font-size: 19px; fill: #3954a6; }
.dk { fill: #39435d; }
.gr { fill: #4b7a52; }
.tW { font-size: 13px; fill: #2b47a0; }

.styles { display: flex; padding: 4px 7px 0 4px; gap: 6px; }
.gallery {
  flex: 1 1 0;
  min-width: 0;
  height: 72px;
  display: flex;
  gap: 8px;
  align-items: center;
  padding: 0 0 0 5px;
  border: 1px solid #bed0ec;
  background: #dce8f8;
}
.card {
  flex: 1 1 0;
  min-width: 0;
  height: 61px;
  display: flex;
  flex-direction: column;
  justify-content: space-between;
  background: #fff;
  overflow: hidden;
  color: #3f3c78;
  line-height: 22px;
  white-space: nowrap;
}
.card > span { display: block; width: 100%; text-align: center; }
.card > span:last-child { height: 24px; }
.card .pv { height: 37px; line-height: 36px; font-size: 15px; color: #1f222c; margin: 0 3px; width: auto; overflow: hidden; }
.card .pv.h1 { font-size: 29px; line-height: 33px; text-align: left; font-weight: 700; }
.card .pv.h2, .card .pv.h4 { font-family: "Liberation Serif", serif; font-size: 24px; font-weight: 700; text-align: left; }
.card .pv.h4 { font-size: 22px; }
.card .pv.h3 { font-size: 21px; font-weight: 600; text-align: left; }
.card .cr { width: 7px; height: 7px; margin: 0; color: #4a55a0; }
.gal-scroll { flex: none; align-self: stretch; width: 17px; display: flex; flex-direction: column; }
.gal-scroll button { flex: 1; display: flex; align-items: center; justify-content: center; border: 1px solid #c3d3ec; background: #dfe9f8; }
.change { flex: none; width: 62px; }
.change svg { margin: 0 0 5px; }
.change span { white-space: nowrap; }

/* Workspace */
.work { flex: 1; min-height: 0; display: flex; background: #a9c2e8; }
.pane { flex: none; width: 315px; padding-top: 4px; display: flex; flex-direction: column; border-right: 8px solid #c3dafa; }
.pane-head { flex: none; height: 34px; display: flex; align-items: center; padding: 0 11px 0 6px; background: linear-gradient(#d7e6fc, #dce9fd 60%, #b9d1f7); color: #3a3f4c; }
.pane-head select { appearance: none; width: 131px; height: 28px; border: 0; background: linear-gradient(to right, #fff 116px, #dae4f8 116px); padding: 0 3px 2px; outline: 0; }
.pane-dd { margin: 0 auto 0 -13px; border-width: 5px; border-top: 6px solid #1e2439; border-bottom: 0; }
.pane-main { flex: 1; min-height: 0; display: flex; }
.tree {
  flex: 1;
  min-width: 0;
  margin: 0;
  padding: 5px 0 0;
  overflow: hidden;
  list-style: none;
  background: #fff;
  color: #33343a;
  font-family: "Noto Sans CJK SC", sans-serif;
  line-height: 20px;
}
.tree li { height: 20px; display: flex; white-space: pre; }
.tree .en, .tree .n { font-family: "Liberation Mono", monospace; font-size: 13px; line-height: 23px; }
.tree .n { flex: none; width: 23px; }
.tree .l0 { padding-left: 12px; }
.tree .l1 { padding-left: 30px; }
.tree .l2 { padding-left: 115px; }
.tree .l3 { padding-left: 133px; }
.tree .l3 .n { width: 37px; }
.tree .open { padding-left: 98px; }
.tree .open .box { margin-right: 6px; }
.tree .sel { margin-left: 115px; padding-left: 0; background: #4592ec; color: #e4f2ff; }
.box { flex: none; position: relative; width: 11px; height: 11px; margin: 5px 7px 0 0; border: 1px solid #9aa09f; background: #f5f5f3; }
.l1 .box { margin-left: 0; margin-right: 6px; }
.box::after { content: ""; position: absolute; left: 2px; right: 2px; top: 4px; height: 1px; background: #6d6f74; }
.vbar { flex: none; width: 20px; display: flex; flex-direction: column; align-items: center; background: #829ecb; padding: 8px 0 6px; gap: 8px; }
.hbar { flex: none; height: 21px; display: flex; align-items: center; margin-right: 20px; padding: 0 8px 0 6px; gap: 8px; background: #829ecb; }
.thumb { flex: none; background: #e4edfa; border: 1px solid #7288b2; }
.vbar .thumb { width: 18px; height: 20px; background: repeating-linear-gradient(#eef3fb 0 2px, #bac7de 2px 3px); }
.hbar .thumb { width: 20px; height: 17px; background: repeating-linear-gradient(to right, #eef3fb 0 3px, #c4cfe2 3px 4px); }
.arr { flex: none; width: 0; height: 0; border: 5px solid transparent; }
.arr.up { border-bottom-color: #485c88; border-top: 0; }
.arr.down { border-top-color: #485c88; border-bottom: 0; margin-top: auto; }
.arr.left { border-right-color: #485c88; border-left: 0; }
.arr.right { border-left-color: #485c88; border-right: 0; margin-left: auto; }

.canvas { flex: 1; min-width: 0; padding: 8px 32px 0 37px; background: linear-gradient(#a8bfe6, #6f92cf 35%, #6389c9 70%, #7397d3); }
.paper { height: 100%; display: flex; background: #fff; overflow: hidden; box-shadow: -1px 0 #5f7499, 2px 0 #4d6797; color: #24252b; }
.notes { flex: none; width: 328px; background: #f2f2f3; border-left: 1px solid #e8e8ea; }
.text { flex: 1; min-width: 0; padding: 27px 14px 0 130px; font-family: "Noto Sans CJK SC", sans-serif; font-size: 19px; line-height: 29px; white-space: nowrap; }
.text p { margin: 0; }
.text p.blank { height: 28px; line-height: 26px; }
.text .in { padding-left: 38px; }
.text .li { position: relative; padding-left: 71px; }
.text .li::before { content: ""; position: absolute; left: 39px; top: 9px; width: 12px; height: 12px; border-radius: 50%; background: #111; }
.text .en { font-family: Lato, sans-serif; font-size: 17px; line-height: 0; }
.full { display: block; height: 29px; text-align: justify; text-align-last: justify; white-space: normal; }
.bad { text-decoration: underline wavy #d0607a 1px; text-decoration-skip-ink: none; text-underline-offset: 3px; }
.cr { display: inline-block; width: 10px; height: 8px; margin-left: 6px; color: #8890a0; }
.blank .cr { margin-left: 0; }
.text h2 { position: relative; display: flex; align-items: baseline; gap: 5px; margin: 0 0 12px; font-size: 23px; line-height: 32px; height: 32px; font-weight: 700; }
.text h2 .cr { margin: 0 0 0 -6px; }
.text h2.next { margin-top: 26px; }
.text h2 .num { width: 29px; }
.text h2 .num, .text h2 .en { font-family: "Liberation Serif", serif; font-size: 21px; line-height: 32px; }
.sq { position: absolute; left: -10px; top: 7px; width: 5px; height: 5px; background: #111; }
.caret { position: absolute; left: 0; top: 6px; width: 1px; height: 26px; background: #111; }

.docbar { flex: none; width: 19px; display: flex; flex-direction: column; align-items: center; background: #c4d8f8; padding-top: 5px; }
.track { flex: 1; width: 100%; display: flex; flex-direction: column; align-items: center; background: #8ba8d6; margin-top: 4px; padding: 8px 0; }
.track .thumb { width: 17px; height: 9px; margin-top: 38px; }
.jump { margin: 2px 0; }

/* Status bar */
.status {
  flex: none;
  height: 28px;
  display: flex;
  align-items: center;
  background: linear-gradient(#d7e5fc, #bbd0f6 45%, #cfdffa);
  border-top: 1px solid #7f99c9;
  line-height: 25px;
  white-space: nowrap;
}
.cell { height: 27px; display: flex; align-items: center; padding: 0 10px 2px; border-right: 1px solid #a8bfe6; }
.c1 { width: 93px; } .c2 { width: 100px; padding-left: 12px; } .c3 { width: 180px; gap: 20px; } .c4 { width: 49px; padding-right: 0; }
.views { margin-left: auto; height: 27px; display: flex; align-items: center; padding: 0 5px 0 6px; background: linear-gradient(#b5ccf4, #88a8de 50%, #a5c0ee); border-left: 1px solid #7591c4; }
.view-set { display: flex; height: 22px; width: 117px; border: 1px solid #89a3d3; border-radius: 3px; overflow: hidden; background: #d0dff7; }
.view-set button { flex: 1; display: flex; align-items: center; justify-content: center; border-right: 1px solid #b4c7e8; }
.pct { margin: 0 11px 0 10px; font-size: 16px; }
.round { width: 19px; height: 19px; border: 1px solid #5c6f9d; border-radius: 50%; background: #e6edf9; font-size: 18px; font-weight: 700; line-height: 16px; color: #47536f; }
.zoom { display: flex; width: 128px; }
.zoom input { appearance: none; width: 100%; height: 18px; margin: 0; background: linear-gradient(#5f7bb4, #5f7bb4) center / 100% 1px no-repeat; }
.zoom input::-webkit-slider-thumb { appearance: none; width: 10px; height: 15px; border: 1px solid #52658f; border-radius: 1px 1px 5px 5px; background: #e4ecf9; }

/* Taskbar */
.taskbar { position: relative; flex: none; height: 28px; display: flex; background: linear-gradient(#a9b5c7 0 1px, #8797b0 3px, #8292a9); border-top: 1px solid #5d6a80; overflow: hidden; color: #eef3fa; }
.start { margin-left: 13px; align-items: flex-start; }
.quick { width: 138px; display: flex; align-items: center; gap: 9px; padding: 4px 0 0 20px; }
.quick b { font-size: 22px; line-height: 20px; margin: -12px 0 0 4px; font-weight: 400; }
.task { width: 199px; height: 30px; margin-right: 4px; padding: 6px 8px 0 11px; display: flex; align-items: center; gap: 5px; border: 1px solid #546077; border-radius: 3px 3px 0 0; background: linear-gradient(110deg, #b0b9c9, #929db2 50%, #8390a7); font-size: 16px; line-height: 22px; white-space: nowrap; flex: none; }
.task.active { background: linear-gradient(#ccd5e8, #a9b8d2); padding-left: 9px; }
.tray { margin-left: auto; display: flex; align-items: center; gap: 12px; padding: 6px 14px 0 0; }
.tray time { margin-left: 14px; font-size: 15px; line-height: 20px; width: 41px; }
.desk { width: 15px; border: 1px solid #5f6c84; background: linear-gradient(#aab4c5, #6c7a91); }
.pointer { position: absolute; left: 494px; top: 20px; }
.mark { position: absolute; right: 9px; bottom: -2px; font-family: "Liberation Sans", sans-serif; font-size: 16px; line-height: 18px; color: rgba(224, 226, 230, .75); }
```
